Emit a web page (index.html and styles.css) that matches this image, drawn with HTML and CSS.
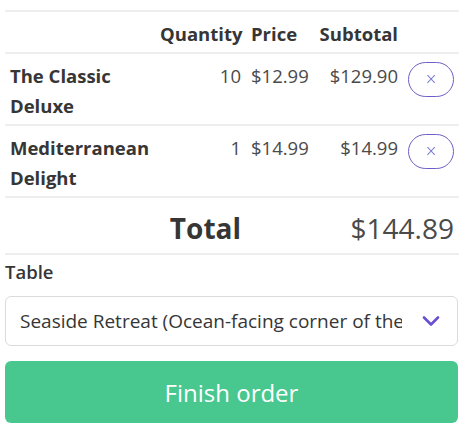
FILE: index.html
```html
<!DOCTYPE html>
<html>
<head>
<meta charset="utf-8">
<link rel="stylesheet" href="styles.css">
</head>
<body>
<div class="page">
  <table class="cart">
    <colgroup>
      <col class="c-name"><col class="c-qty"><col class="c-price"><col class="c-sub"><col class="c-act">
    </colgroup>
    <thead>
      <tr>
        <th></th>
        <th class="right">Quantity</th>
        <th>Price</th>
        <th class="right">Subtotal</th>
        <th></th>
      </tr>
    </thead>
    <tbody>
      <tr>
        <th class="name">The Classic Deluxe</th>
        <td class="right">10</td>
        <td>$12.99</td>
        <td class="right">$129.90</td>
        <td class="act"><button class="remove" type="button">×</button></td>
      </tr>
      <tr>
        <th class="name">Mediterranean Delight</th>
        <td class="right">1</td>
        <td>$14.99</td>
        <td class="right">$14.99</td>
        <td class="act"><button class="remove" type="button">×</button></td>
      </tr>
      <tr class="total">
        <th colspan="2" class="right">Total</th>
        <td colspan="3" class="right">$144.89</td>
      </tr>
    </tbody>
  </table>

  <div class="field">
    <label class="label" for="table">Table</label>
    <div class="select">
      <select id="table">
        <option>Seaside Retreat (Ocean-facing corner of the restaurant)</option>
      </select>
      <svg class="chev" width="18" height="12" viewBox="0 0 18 12"><path d="M2 2.5 L9 9.5 L16 2.5" fill="none" stroke="#6b4fd3" stroke-width="2.6" stroke-linecap="round" stroke-linejoin="round"/></svg>
    </div>
  </div>

  <button class="finish" type="button">Finish order</button>
</div>
</body>
</html>
```

FILE: styles.css
```css
* { box-sizing: border-box; }
html, body { margin: 0; padding: 0; background: #fff; }
body {
  font-family: "Open Sans", "Noto Sans", sans-serif;
  font-size: 18.5px;
  line-height: 30px;
  color: #4a4a4a;
}
.page {
  width: 454px;
  margin: 10px 0 0 5px;
}
.cart {
  width: 454px;
  border-collapse: collapse;
  table-layout: fixed;
  border-top: 2px solid #eeeeee;
}
.c-name { width: 150px; }
.c-qty { width: 91px; }
.c-price { width: 68px; }
.c-sub { width: 89px; }
.c-act { width: 56px; }
.cart th, .cart td {
  padding: 7px 5px 3px 5px;
  text-align: left;
  vertical-align: top;
  border-bottom: 2px solid #eeeeee;
  white-space: nowrap;
}
.cart th { font-weight: 700; color: #363636; }
.cart th.name { white-space: normal; }
.cart .right { text-align: right; }
.cart td.act { padding: 5px 3px 5px 5px; }
.remove {
  display: block;
  margin: 3px 0 0 0;
  width: 46px;
  height: 35px;
  border: 1px solid #6e5fc6;
  border-radius: 999px;
  background: #fff;
  color: #6e5fc6;
  font-family: "DejaVu Sans", sans-serif;
  font-size: 15px;
  font-weight: 300;
  line-height: 1;
  padding: 0;
}
.total th, .total td {
  font-size: 28px;
  line-height: 45px;
  padding-top: 8px;
  padding-bottom: 2px;
}
.total td { color: #4a4a4a; }
.field { margin-top: 2px; }
.label {
  display: block;
  font-weight: 600;
  color: #363636;
  margin-bottom: 9px;
}
.select {
  position: relative;
  width: 453px;
}
.select select {
  appearance: none;
  -webkit-appearance: none;
  display: block;
  width: 100%;
  height: 50px;
  border: 1px solid #dbdbdb;
  border-radius: 6px;
  background: #fff;
  color: #363636;
  font-family: inherit;
  font-size: 19px;
  padding: 0 55px 0 14px;
  outline: none;
}
.chev {
  position: absolute;
  right: 18px;
  top: 19px;
  pointer-events: none;
}
.finish {
  display: block;
  margin-top: 15px;
  width: 453px;
  height: 62px;
  border: none;
  border-radius: 6px;
  background: #48c78e;
  color: #fff;
  font-family: inherit;
  font-size: 24px;
}
```
